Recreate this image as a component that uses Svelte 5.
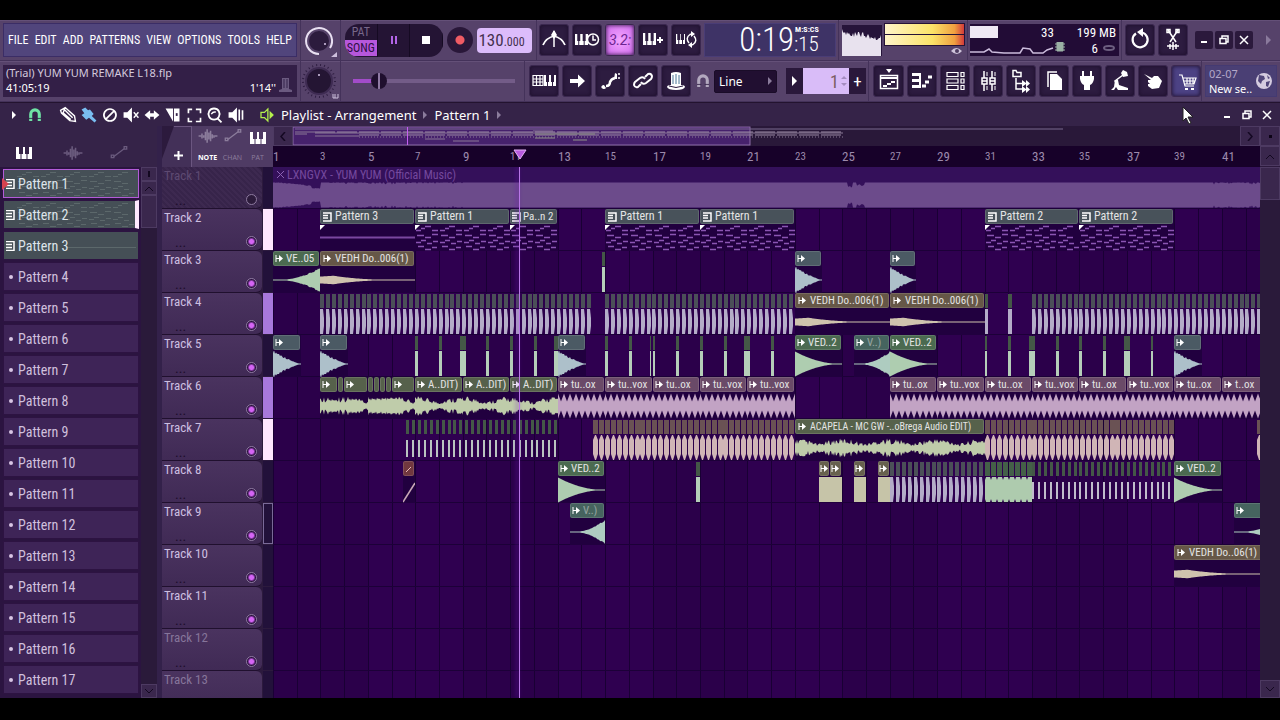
<script>
    const BEAT = 5.93;
    const px = (beats) => Math.round(beats * BEAT);

    const menu = ["FILE", "EDIT", "ADD", "PATTERNS", "VIEW", "OPTIONS", "TOOLS", "HELP"];
    const patterns = Array.from({ length: 17 }, (_, i) => `Pattern ${i + 1}`);
    const bars = Array.from({ length: 21 }, (_, i) => i * 2 + 1);

    const keys = (x, y, w = 12, h = 11) =>
        `<path fill="currentColor" fill-rule="evenodd" d="M${x} ${y}h${w}v${h}h-${w}z M${x + w / 4 - 1} ${y}v${h - 4}h1v4h1v-4h1v${4 - h}z M${x + (w * 2) / 3 - 1} ${y}v${h - 4}h1v4h1v-4h1v${4 - h}z"/>`;
    const line = (d, w = 1.5) =>
        `<path fill="none" stroke="currentColor" stroke-width="${w}" d="${d}"/>`;
    const fill = (d) => `<path fill="currentColor" d="${d}"/>`;

    // 28 x 28 drawing area, one entry per glyph
    const icons = {
        metronome: line("M3 19Q6 12 14 10Q22 12 25 19", 1.8) + line("M14 5V21") + fill("M14 4l3 5-3 4-3-4z"),
        wait: keys(2, 8, 13, 11) + `<circle cx="20" cy="13.500" r="5.500" fill="#2d1c40" stroke="currentColor" stroke-width="1.500"/>` + line("M20 9.500V14H23"),
        keysPlus: keys(4, 7, 13, 12) + line("M18 14H24M21 11V17", 2),
        keysLoop: keys(4, 8, 9, 10) + line("M17 17Q13 12 18 8.500L20 8M22 10Q26 15 21 18.500L19 19") + fill("M19 5l4 3-4 3zM20 16l-4 3 4 3z"),
        playlistKeys: line("M3 8.500H13V18.500H3ZM3 12H13M3 15H13M6.500 8V19M10 8V19", 1.2) + keys(14, 8, 12, 11),
        arrow: fill("M7 12h8V7.500l7 6.500-7 6.500V16H7z"),
        slide: line("M10 19Q14 19 14 15Q15 12 19 11", 2.5) + fill("M8 18a2.500 2 0 1 0 2 3zM19 6l2 1v5h-3z") + line("M23 6v2M23 10v2"),
        link: line("M12 17l-3 3q-3 1-4-2 0-2 1-3l5-4q3-2 5 1M16 10l3-3q3-1 4 2 0 2-1 3l-5 4q-3 2-5-1", 2),
        hat: fill("M9 6q5-2 10 0v12q4 0 4 2-1 3-9 3t-9-3q0-2 4-2z") + `<path d="M11 8v9M14 7v10M17 8v9" stroke="#4b7696" fill="none"/><path d="M7 19q7 3 14 0" stroke="#2d1c40" fill="none"/>`,
        playlist: fill("M11 2h6l-3 4z") + line("M5.500 8.500H22.500V21.500H5.500Z") + line("M5 11H23", 2) + line("M8 19h4M12 17h4M16 15h4", 2),
        steps: fill("M4 6h8v3H4zM4 12h8v3H4zM4 18h8v3H4z") + line("M12 6v15", 2) + line("M14 19h4M17 15h4M20 10h4", 3),
        rack: line("M6 5.500H17V9.500H6ZM6 12H17V16H6ZM6 18.500H17V22.500H6ZM20 5.500h3v4h-3zM20 12h3v4h-3zM20 18.500h3v4h-3z", 1.2),
        mixer: line("M10 4V24M18 4V24") + line("M13 5V9M21 5V9M13 19V23M21 19V23", 1) + `<path d="M8 11h5v6H8zM16 11h5v6h-5z" fill="#2d1c40" stroke="currentColor" stroke-width="1.500"/>` + line("M8 14h5M16 14h5"),
        browser: line("M6 3.500h3l1 2h4v4H6zM9 11V22H15M9 16.500H15") + fill("M15 13l4 3v-3l4 3.500-4 3.500v-3l-4 3zM15 19l4 3v-3l4 3.500-4 3.500v-3l-4 3z"),
        pages: line("M8 20V5H17") + fill("M10 7h7l5 5v11H10z"),
        plug: fill("M9 4h2v5h6V4h2v5h2v3q-1 5-4 6v5h-6v-5q-3-1-4-6V9h2z"),
        shovel: fill("M17 3l4 2 1 4-5 1-2-4zM5 23l3-3 1-7h3l1 5 9 3v2H12l-2-3-2 3z") + line("M17 8L9 14L11 18"),
        hand: fill("M5 7l8 4 2-2h4l4 5-3 7-7 1-4-3v-2h2l-2-2v-2h3z"),
        cart: line("M7 8h3l3 11h9M11 11h13l-2 6H13M15 11v6M18 11v6M21 11v6M12 14h11", 1.2) + fill("M13 21h3v2h-3zM19 21h3v2h-3z"),
        undo: line("M10 7.500A7.500 7.500 0 1 0 16 6.500", 2.2) + fill("M17 2v9l-6-5z"),
        cut: line("M9 4l8 12M19 4l-8 12") + line("M8 3.500h3v3H8zM17 3.500h3v3h-3z") + line("M8 20h12M11 18v5M14 16v8M17 18v5"),
        wave: line("M3 14h3M7 11v6M9 13v3M11 9v10M13 6v16M15 10v8M17 8v12M19 12v5M21 13v3M22 14h3", 1.8),
        automation: line("M8 18L20 9") + line("M5 16.500h3v3H5zM20 6.500h3v3h-3z"),
        piano: `<path fill="currentColor" fill-rule="evenodd" d="M6 8h16v12H6zM9 8v7h1.500v5h1v-5H13V8zM15 8v7h1.500v5h1v-5H19V8z"/>`,
        pencil: line("M6 9l5-3 10 9 1 6-6-1-9-8zM11 6l-2 5M10 8l9 9M8 11l9 8", 1.5),
        brush: fill("M6 8l4-2 3 3 2-1 4 5-2 2 5 5-2 2-6-5-3 2-5-5 3-2z"),
        erase: line("M14 7.500a6.500 6.500 0 1 1-.1 0zM9.500 18.500L18.500 9.500", 1.8),
        mute: fill("M6 11h4l5-5v16l-5-5H6z") + line("M17 11l5 6M22 11l-5 6"),
        slip: fill("M6 14l6-5v3h4V9l6 5-6 5v-3h-4v3z"),
        slice: fill("M6 7h8v14zM15 7h6v14h-6z") + `<path d="M17 12h2v3h-2z" fill="#352348"/>`,
        select: line("M8 12V8h4M16 8h5v4M21 17v4h-5M12 21H8v-4", 1.8),
        zoom: line("M13 7a6 6 0 1 1-.1 0zM17 18l4 4", 2) + line("M10 13q2-3 5-2"),
        play: fill("M6 11h4l5-5v16l-5-5H6z") + line("M17.500 8v12M21 9v10", 1.8),
        speaker: line("M7 11h4l4-4v14l-4-4H7z") + fill("M17 9l5 5-5 5z"),
        magnet: line("M9 21V13a5 5 0 0 1 10 0V21", 3.6) + `<path d="M7 18h5M16 18h5" stroke="#352348" />`,
    };

    const tools = [
        ["pencil", "#fff"], ["brush", "#79bdf0"], ["erase", "#fff"], ["mute", "#fff"], ["slip", "#fff"],
        ["slice", "#fff"], ["select", "#fff"], ["zoom", "#fff"], ["play", "#fff"],
    ];

    function clip(start, length, type, color, label = "") {
        return { start, length, type, color, label };
    }

    // several equal hits, one every beat
    function run(start, end, color, body, thick = 4, inset = 0) {
        return { start, length: end - start, type: "run", color, body, thick, inset };
    }

    const slim = (list, body = "#b5ceb9") =>
        list.map(([start, length]) => ({ start, length, type: "slim", color: "#445847", body }));
    const vox = (list) =>
        list.map(([start, label]) => clip(start, 8, "vox", "mauve", label));

    const tracks = [
        { strip: "", off: true, clips: [] },
        {
            strip: "#ffe6ff",
            clips: [
                clip(8, 16, "flat", "steel", "Pattern 3"), clip(24, 16, "notes", "steel", "Pattern 1"),
                clip(40, 8, "notes", "steel", "Pa..n 2"), clip(56, 16, "notes", "steel", "Pattern 1"),
                clip(72, 16, "notes", "steel", "Pattern 1"), clip(120, 16, "notes", "steel", "Pattern 2"),
                clip(136, 16, "notes", "steel", "Pattern 2"),
            ],
        },
        {
            strip: "",
            clips: [
                clip(0, 8, "rise", "green", "VE..05"), clip(8, 16, "pluck", "brown", "VEDH Do..006(1)"),
                ...slim([[55.4, 0.6]]), clip(88, 4.5, "hit", "slate"), clip(104, 4.5, "hit", "slate"),
            ],
        },
        {
            strip: "#a878dc",
            clips: [
                run(8, 54, "#4b5058", "#b4adc8"), run(56, 88, "#4b5058", "#b4adc8"),
                clip(88, 16, "pluck", "brown", "VEDH Do..006(1)"), clip(104, 16, "pluck", "brown", "VEDH Do..006(1)"),
                ...slim([[120, 0.6], [124, 0.6]], "#b4adc8"), run(128, 168, "#4b5058", "#b4adc8"),
            ],
        },
        {
            strip: "",
            clips: [
                clip(0, 4.7, "hit", "slate"), clip(8, 4.7, "hit", "slate"),
                ...slim([[24, 0.5], [28, 0.5], [31.5, 1], [36, 0.5], [40, 0.5], [44, 0.5], [47.4, 0.6]]),
                clip(48, 4.7, "hit", "slate"),
                ...slim([[56, 0.5], [60, 0.5], [63.5, 0.3], [64, 0.4], [68, 0.5], [72, 0.5], [76, 0.5], [79.5, 1], [84, 0.5]]),
                clip(88, 8, "decay", "green", "VED..2"), clip(98, 6, "rise", "teal", "V..)"),
                clip(104, 8, "decay", "green", "VED..2"),
                ...slim([[120, 0.4], [124, 0.5], [127.5, 1], [132, 0.5], [136, 0.4], [140, 0.5], [143.5, 1], [148, 0.4]]),
                clip(152, 4.7, "hit", "slate"),
            ],
        },
        {
            strip: "#a878dc",
            clips: [
                clip(8, 3, "voice", "olive"), clip(11, 1, "voice", "olive"), clip(12, 4, "voice", "olive"),
                ...[16, 17, 18, 19].map((b) => clip(b, 1, "voice", "olive")), clip(20, 4, "voice", "olive"),
                ...[24, 32, 40].map((b) => clip(b, 8, "voice", "olive", "A..DIT)")),
                ...vox([[48, "tu..ox"], [56, "tu..vox"], [64, "tu..ox"], [72, "tu..vox"], [80, "tu..vox"]]),
                ...vox([[104, "tu..ox"], [112, "tu..vox"], [120, "tu..ox"], [128, "tu..vox"], [136, "tu..ox"]]),
                ...vox([[144, "tu..vox"], [152, "tu..ox"], [160, "t..ox"]]),
            ],
        },
        {
            strip: "#ffe6ff",
            clips: [
                run(22.5, 48, "#445847", "#b9c4c0", 3, 5), run(54, 88, "#6a5254", "#d0b5b6", 6),
                clip(88, 32, "voice", "olive", "ACAPELA - MC GW -..oBrega Audio EDIT)"),
                run(120, 152, "#6a5254", "#d0b5b6", 6), run(166, 168, "#6a5254", "#d0b5b6", 6),
            ],
        },
        {
            strip: "",
            clips: [
                clip(22, 2, "auto", "red"), clip(48, 8, "decay", "green", "VED..2"), ...slim([[71.4, 0.6]]),
                ...[92, 94, 98, 102].map((b) => clip(b, 2, "block", "khaki")),
                run(104, 120, "#4b5058", "#b4adc8"), run(120, 128, "#446048", "#aecbae", 7),
                run(128, 152, "#445847", "#c0bccb", 3, 5), clip(152, 8, "decay", "green", "VED..2"),
            ],
        },
        { strip: "hollow", clips: [clip(50, 6, "rise", "teal", "V..)"), clip(162, 8, "rise", "teal")] },
        { strip: "", clips: [clip(152, 16, "pluck", "brown", "VEDH Do..06(1)")] },
        { strip: "", clips: [] },
        { strip: "", dim: true, clips: [] },
        { strip: "", dim: true, clips: [] },
    ];

    const noise = (n) => Math.abs(Math.sin(n * 12.9898) * 43758.5453) % 1;

    function mirror(w, step, amplitude) {
        let top = "";
        let bottom = "";
        for (let x = 0; x <= w; x += step) {
            const a = Math.max(0.5, amplitude(x, x / w));
            top += `L${x} ${(13 - a).toFixed(1)}`;
            bottom = `L${x} ${(13 + a).toFixed(1)}` + bottom;
        }
        return `M0 13${top}${bottom}Z`;
    }

    function shape(type, w, start) {
        if (type === "decay") return mirror(w, 1, (x, t) => 12.5 * Math.pow(1 - t, 2));
        if (type === "rise") return mirror(w, 1, (x, t) => 12.5 * Math.pow(t, 2.4) * (0.85 + noise(x) * 0.2));
        if (type === "hit") return mirror(w, 1, (x, t) => 13 * Math.pow(1 - t, 1.3) * (0.85 + noise(x) * 0.3));
        if (type === "pluck") return mirror(w, 1, (x, t) => (t < 0.14 ? 3.4 + t * 6 : 4.3 * Math.pow((1 - t) / 0.86, 3)));
        if (type === "vox") return mirror(w, 1, (x) => 4.5 + 8 * Math.abs((x % 6) - 3) / 3);
        if (type === "voice")
            return mirror(w, 1, (x) => (3 + 4 * Math.abs(Math.cos(x / 15))) * (0.5 + noise(x + start) * 0.9));
        if (type === "block") return `M0 0H${w}V25H0Z`;
        return "";
    }

    // the phrase that repeats every bar inside a pattern clip
    const phrase = [
        [1, 4, 5], [6, 2, 4], [10, 0, 6], [17, 4, 6], [2, 9, 7], [10, 11, 6], [17, 8, 6],
        [1, 16, 5], [6, 14, 5], [12, 17, 5], [18, 15, 5], [3, 20, 6], [10, 23, 6], [17, 21, 5],
    ];

    function notes(w, scale = 24) {
        let d = "";
        for (let x = 0; x < w - 6; x += scale) {
            for (const [dx, y, len] of phrase) {
                if (x + dx + len <= w) d += `M${x + dx} ${y + 1.5}h${len}`;
            }
        }
        return d;
    }

    const song = mirror(987, 1, (x) => {
        if (x < 48) return 10 + Math.cos(x / 16) * 2 + noise(x) - (x > 38 ? 2 : 0);
        if (x > 574 && x < 580) return 10 - noise(x) * 3;
        if (x > 583 && x < 592) return 9 + noise(x) * 2;
        return x < 190 || x > 940 ? 12.5 - Math.pow(noise(x), 6) * 2 : 12.5;
    });

    const scope = "M0 31V10" +
        Array.from({ length: 40 }, (_, x) => `L${x} ${Math.round(4 + x * 0.15 + noise(x * 3) * 6)}`).join("") + "V31Z";
</script>

{#snippet icon(name, size = 28)}
    <svg class="icon" width={size} height={size} viewBox="0 0 28 28" aria-hidden="true">{@html icons[name]}</svg>
{/snippet}

{#snippet tool(name, label)}
    <button class="tool {name}" aria-label={label ?? name}>{@render icon(name)}</button>
{/snippet}

{#snippet windowButtons()}
    <button aria-label="Minimize"><svg width="14" height="14"><path d="M4 9h6" stroke="#fff" stroke-width="2" /></svg></button>
    <button aria-label="Restore"><svg width="14" height="14"><path d="M3 5.500h6v5H3zM5 5V3h6v6H9" fill="none" stroke="#fff" stroke-width="1.500" /></svg></button>
    <button aria-label="Close"><svg width="14" height="14"><path d="M3 3l8 8M11 3l-8 8" stroke="#fff" stroke-width="1.500" /></svg></button>
{/snippet}

<div class="app">
    <header class="toolbar">
        <div class="bar">
            <div class="cell left">
                <nav class="menu">
                    {#each menu as item}<button>{item}</button>{/each}
                </nav>
            </div>
            <div class="cell knob">
                <svg width="38" height="38" viewBox="0 0 38 38">
                    <circle cx="18" cy="20" r="10" fill="#2c1b3d" />
                    <path d="M18 33A13 13 0 1 1 29 27" fill="none" stroke="#e9e0f2" stroke-width="2" />
                    <circle cx="24" cy="23" r="1" fill="#d8c8ea" />
                    <path d="M36 31v5h-6z" fill="#cdbfdc" />
                </svg>
            </div>
            <div class="cell transport">
                <div class="pill">
                    <button class="mode"><span>PAT</span><span class="song">SONG</span></button>
                    <button aria-label="Pause"><svg width="10" height="10"><path d="M2 1h2v8H2zM6 1h2v8H6z" fill="#b264e6" /></svg></button>
                    <button aria-label="Stop"><svg width="10" height="10"><path d="M1 1h8v8H1z" fill="#fff" /></svg></button>
                </div>
                <button class="record" aria-label="Record"></button>
                <button class="tempo">130<small>.000</small></button>
            </div>
            <div class="cell grow">
                {@render tool("metronome")}
                {@render tool("wait")}
                <button class="tool count">3.2:</button>
                {@render tool("keysPlus", "Step edit")}
                {@render tool("keysLoop", "Loop record")}
                <div class="time">
                    <span class="big">0:19</span><span class="small"><i>M:S:CS</i>:15</span>
                </div>
            </div>
            <div class="cell meters">
                <svg width="40" height="31" class="scope"><path d={scope} fill="#e8e2ee" /></svg>
                <div class="levels">
                    <i></i><i></i>
                    <svg width="14" height="10"><path d="M1 5q5-6 11 0q-5 6-11 0z" fill="#cfc4da" /><circle cx="7" cy="5" r="2" fill="#4d3c60" /></svg>
                </div>
            </div>
            <div class="cell">
                <div class="memory">
                    <div><b></b><span>33</span><span>199 MB</span></div>
                    <div>
                        <svg width="84" height="14"><path d="M0 11h14l5-3 3 3 12 1h16l3-5 7 1 3 4h10l4-3 6-2" fill="none" stroke="#cbbcdc" stroke-width="1.500" /></svg>
                        <svg width="12" height="12"><path d="M3 0h6v9H3zM1 2h10M1 5h10M1 8h10" fill="#9ab0a4" stroke="#9ab0a4" /></svg>
                        <span class="voices">6</span>
                        <svg width="14" height="8"><ellipse cx="7" cy="4" rx="5" ry="2" fill="none" stroke="#6d5f80" stroke-width="2" /></svg>
                    </div>
                </div>
            </div>
            <div class="cell last">
                {@render tool("undo")}
                {@render tool("cut")}
                <div class="windows boxed">{@render windowButtons()}</div>
                <svg width="6" height="10"><path d="M0 0l5 5-5 5z" fill="#8a7a9c" /></svg>
            </div>
        </div>

        <div class="bar">
            <div class="cell left">
                <div class="project">
                    <div>(Trial) YUM YUM REMAKE L18.flp</div>
                    <div class="hint"><span>41:05:19</span><span>1'14''</span></div>
                    <svg width="16" height="18"><path d="M4 2h7v11l3 1v2H1v-2l3-1z" fill="#6b5a80" /><path d="M6 3v9M9 3v9" stroke="#35234a" /></svg>
                </div>
            </div>
            <div class="cell knob">
                <svg width="38" height="38" viewBox="0 0 38 38">
                    <circle cx="18" cy="19" r="16" fill="none" stroke="#2f1e42" stroke-width="2" stroke-dasharray="1 3" />
                    <circle cx="18" cy="19" r="13" fill="#241533" stroke="#3e2b52" stroke-width="2" />
                    <circle cx="18" cy="13" r="1" fill="#d8c8ea" />
                    <path d="M32 32v4h5v-4M34 32v4" fill="none" stroke="#cdbfdc" />
                </svg>
            </div>
            <div class="cell grow"><input type="range" min="0" max="100" value="12" aria-label="Song position" /></div>
            <div class="cell modes">
                {@render tool("playlistKeys", "Pattern keys")}
                {@render tool("arrow")}
                {@render tool("slide")}
                {@render tool("link")}
                {@render tool("hat")}
                <span class="snap">{@render icon("magnet", 24)}</span>
                <div class="drop">
                    <select aria-label="Snap"><option>Line</option></select>
                    <svg width="5" height="8"><path d="M0 0l4 4-4 4z" fill="#8b7c9c" /></svg>
                </div>
                <div class="picker">
                    <button aria-label="Next pattern"><svg width="6" height="10"><path d="M0 0l5 5-5 5z" fill="#fff" /></svg></button>
                    <input type="text" value="1" aria-label="Pattern number" />
                    <button>+</button>
                    <svg width="6" height="12"><path d="M0 4l3-3 3 3zM0 8l3 3 3-3z" fill="#a58cc0" /></svg>
                </div>
            </div>
            <div class="cell panels">
                {#each ["playlist", "steps", "rack", "mixer", "browser", "pages", "plug", "shovel", "hand", "cart"] as name}
                    {@render tool(name)}
                {/each}
            </div>
            <div class="cell last">
                <button class="news">
                    <span><i>02-07</i>New se..</span>
                    <svg width="18" height="18"><circle cx="9" cy="9" r="8" fill="#d5cce0" /><path d="M4 3l5 1 1 3-3 2-1 3-3-3zM11 10l4-1-2 6-2-1zM12 3l3 3-2 1z" fill="#51467a" /></svg>
                </button>
            </div>
        </div>
    </header>

    <div class="titlebar">
        <svg width="5" height="8"><path d="M0 0l4 4-4 4z" fill="#fff" /></svg>
        <button class="snapping" aria-label="Snap">{@render icon("magnet", 24)}</button>
        <div class="brushes">
            {#each tools as [name, color]}
                <button style:color aria-label={name}>{@render icon(name, 26)}</button>
            {/each}
        </div>
        <button class="preview-button" aria-label="Preview">{@render icon("speaker", 24)}</button>
        <button class="crumb">Playlist - Arrangement</button>
        <svg width="5" height="8"><path d="M0 0l4 4-4 4z" fill="#8b7c9c" /></svg>
        <button class="crumb">Pattern 1</button>
        <svg width="5" height="8"><path d="M0 0l4 4-4 4z" fill="#8b7c9c" /></svg>
        <div class="windows">{@render windowButtons()}</div>
    </div>

    <main>
        <aside>
            <div class="tabs">
                <button class="active" aria-label="Patterns">{@render icon("piano", 28)}</button>
                <button aria-label="Audio">{@render icon("wave", 24)}</button>
                <button aria-label="Automation">{@render icon("automation", 24)}</button>
            </div>
            <div class="list">
                <ul>
                    {#each patterns as name, i}
                        <li>
                            <button class:used={i < 3} class:selected={i === 0} class:playing={i === 1}>
                                {#if i < 3}
                                    <svg class="preview" width="120" height="26">
                                        <path d={i < 2 ? notes(118) : "M50 14.500H120"} stroke="#5c686b" fill="none" />
                                    </svg>
                                    <svg width="9" height="10"><path d="M0 .5h8v9H0M0 3.500h6M0 6.500h6" fill="none" stroke="#fff" stroke-width="1.500" /></svg>
                                {:else}
                                    <i></i>
                                {/if}
                                <span>{name}</span>
                            </button>
                        </li>
                    {/each}
                </ul>
                <div class="scroll">
                    <button aria-label="Menu"><svg width="4" height="6"><path d="M1 0h2v6H1z" fill="#130820" /></svg></button>
                    <button aria-label="Up"><svg width="8" height="5"><path d="M0 5l4-4 4 4" fill="none" stroke="#130820" /></svg></button>
                    <div class="thumb"></div>
                    <button class="end" aria-label="Down"><svg width="8" height="5"><path d="M0 0l4 4 4-4" fill="none" stroke="#130820" /></svg></button>
                </div>
            </div>
        </aside>

        <section class="playlist">
            <div class="top">
                <button class="add" aria-label="Add track"><svg width="9" height="9"><path d="M4.500 0v9M0 4.500h9" stroke="#fff" stroke-width="2" /></svg></button>
                <div class="focus">
                    <button>{@render icon("wave", 24)}<span>NOTE</span></button>
                    <button>{@render icon("automation", 24)}<span>CHAN</span></button>
                    <button>{@render icon("piano", 28)}<span>PAT</span></button>
                </div>
                <div class="ruler">
                    <div class="overview">
                        <button aria-label="Scroll left"><svg width="6" height="9"><path d="M5 0L1 4.500 5 9" fill="none" stroke="#140822" stroke-width="1.500" /></svg></button>
                        <div class="map">
                            <svg width="770" height="20">
                                <rect x="0" y="1" width="457" height="18" fill="#46216c" stroke="#8c6ba8" />
                                <path d="M2 3H770" stroke="#7b6a90" />
                                <path d="M2 6H22M2 8H14M22 7H550M22 10H66M132 13H152M240 5h20M160 15h26" stroke="#8a7896" />
                                <path d="M22 6H550M66 9H550" stroke="#9c8aa6" stroke-dasharray="20 2" />
                                <path d="M66 11H550" stroke="#8a7896" stroke-dasharray="1 2" />
                                <path d="M242 8h60M242 12h20M280 14h14" stroke="#8f9488" />
                                <path d="M114.500 1V19" stroke="#c560f0" />
                            </svg>
                        </div>
                        <button aria-label="Scroll right"><svg width="6" height="9"><path d="M1 0l4 4.500L1 9" fill="none" stroke="#140822" stroke-width="1.500" /></svg></button>
                    </div>
                    <div class="bars">
                        {#each bars as bar}
                            <span class:minor={bar % 4 === 3} style="left: {px((bar - 1) * 4)}px">{bar}</span>
                        {/each}
                        <svg class="marker" width="14" height="11" style="left: {px(41.5) - 6}px"><path d="M1 1h12L7 10z" fill="#b85be0" stroke="#e3b4f5" /></svg>
                    </div>
                </div>
                <div class="corner"><button aria-label="Zoom"><i></i></button><button aria-label="Up"><svg width="8" height="5"><path d="M0 5l4-4 4 4" fill="none" stroke="#130820" /></svg></button></div>
            </div>

            <div class="body">
                <div class="tracks">
                    {#each tracks as track, t}
                        <div class="track" class:off={track.off} class:dim={track.dim}>
                            <div class="head">
                                <span>Track {t + 1}</span>
                                {#if t < 12}
                                    <em>...</em>
                                    <button aria-label="Mute track {t + 1}"></button>
                                {/if}
                            </div>
                            <div class="strip" class:hollow={track.strip === "hollow"} style:background={track.strip === "hollow" ? null : track.strip}></div>
                        </div>
                    {/each}
                </div>

                <div class="lanes">
                    <svg class="grid" width="100%" height="100%">
                        {#each Array(42) as _, b}
                            <rect x={px(b * 4)} width="24" height="100%" fill={b % 8 < 4 ? "#2b004a" : "#2f0050"} />
                            <rect x={px(b * 4)} width="1" height="100%" fill="#190034" />
                        {/each}
                    </svg>
                    {#each tracks as track, t}
                        <div class="lane">
                            {#if t === 0}
                                <div class="song-clip">
                                    <div><svg width="9" height="9"><path d="M1 1l7 7M8 1L1 8" stroke="#8c62b4" /></svg>LXNGVX - YUM YUM (Official Music)</div>
                                    <svg width="987" height="26"><path d={song} fill="#6c4b8b" /></svg>
                                </div>
                            {/if}
                            {#each track.clips as c}
                                {@const w = px(c.start + c.length) - px(c.start)}
                                {#if c.type === "run"}
                                    <svg class="clip" width={w} height="42" style="left: {px(c.start)}px">
                                        {#each Array(Math.round(c.length)) as _, i}
                                            <rect x={px(i)} y="1" width={Math.min(c.thick, 5)} height="14" fill={c.color} />
                                            {#if c.thick > 6}
                                                <path d="M{px(i)} 19l1-3h4l1 3v19l-1 3h-4l-1-3z" fill={c.body} />
                                            {:else if c.thick > 4}
                                                <path d="M{px(i)} 21l2-5h1l2 5v14l-2 6h-1l-2-6z" fill={c.body} />
                                            {:else if c.inset}
                                                <rect x={px(i)} y={16 + c.inset} width="2" height="17" fill={c.body} />
                                            {:else}
                                                <path d="M{px(i)} 16h3l1 9v8l-1 8h-3z" fill={c.body} />
                                            {/if}
                                        {/each}
                                    </svg>
                                {:else if c.type === "slim"}
                                    <svg class="clip" width={w} height="42" style="left: {px(c.start)}px">
                                        <rect y="1" width={w} height="14" fill={c.color} />
                                        <rect y="16" width={w} height="25" fill={c.body} />
                                    </svg>
                                {:else}
                                    <div class="clip {c.color}" class:short={w < 60} class:long={c.label.length > 20} style="left: {px(c.start)}px; width: {w}px">
                                        <div class="name">
                                            {#if c.color === "steel"}
                                                <svg width="9" height="10"><path d="M0 1h8v8H0M0 3.500h5M0 6h5" fill="none" stroke="#fff" stroke-width="1.500" /></svg>
                                            {:else if c.type === "auto"}
                                                <svg width="8" height="8"><path d="M1 7L6 2" stroke="#e8b8b8" /></svg>
                                            {:else if w > 8}
                                                <svg width="9" height="7"><path d="M1 0v7M1 3.500h6" stroke="#fff" /><path d="M4 0l4 3.500L4 7z" fill="#fff" /></svg>
                                            {/if}
                                            <span class:faded={c.label === "V..)"}>{c.label}</span>
                                        </div>
                                        <svg width={w} height="26">
                                            {#if c.type === "notes"}
                                                <path d="M0 0h5L0 5z" fill="#fff" />
                                                <path d={notes(w)} stroke="#8b55b3" stroke-width="1.500" fill="none" />
                                            {:else if c.type === "flat"}
                                                <path d="M0 0h5L0 5z" fill="#fff" />
                                                <path d="M0 12.500H{w}" stroke="#7a479f" stroke-width="2" />
                                            {:else if c.type === "auto"}
                                                <path d="M0 25L{w} 6" stroke="#c9a8b8" stroke-width="1.500" />
                                            {:else}
                                                <path d={shape(c.type, w, c.start)} fill="currentColor" />
                                            {/if}
                                        </svg>
                                    </div>
                                {/if}
                            {/each}
                        </div>
                    {/each}
                    <div class="playhead" style="left: {px(41.5)}px"></div>
                </div>

                <div class="scroll wide">
                    <div class="thumb"></div>
                    <button class="end" aria-label="Down"><svg width="8" height="5"><path d="M0 0l4 4 4-4" fill="none" stroke="#130820" /></svg></button>
                </div>
            </div>
        </section>
    </main>

    <svg class="cursor" width="13" height="19"><path d="M1 1v14l3-3 3 6 2-1-3-6h5z" fill="#fff" stroke="#222" /></svg>
</div>

<style>
    :global(body) {
        margin: 0;
        background: #000;
    }

    .app {
        position: relative;
        box-sizing: border-box;
        height: 100vh;
        padding: 20px 0 22px;
        display: flex;
        flex-direction: column;
        overflow: hidden;
        background: #000;
        color: #fff;
        font-family: "Roboto Condensed", Roboto, "Liberation Sans", sans-serif;
        font-size: 12px;
    }

    button {
        display: flex;
        align-items: center;
        justify-content: center;
        box-sizing: border-box;
        padding: 0;
        border: 0;
        background: none;
        color: inherit;
        font: inherit;
    }

    svg {
        flex: none;
        display: block;
    }

    i,
    em {
        font-style: normal;
    }

    /* toolbar */

    .toolbar {
        flex: none;
        background: #56426a;
    }

    .bar {
        display: flex;
        height: 41px;
    }

    .cell {
        display: flex;
        flex: none;
        align-items: center;
        gap: 3px;
        box-sizing: border-box;
        padding: 0 2px;
        border-right: 1px solid #44325a;
        border-bottom: 1px solid #44325a;
        box-shadow: inset 0 1px #645078;
    }

    .grow {
        flex: 1;
        min-width: 0;
    }

    .left {
        width: 301px;
        padding: 0 3px;
    }

    .knob {
        width: 40px;
        padding: 0;
    }

    .menu {
        flex: 1;
        display: flex;
        align-items: center;
        justify-content: space-between;
        height: 32px;
        padding: 0 4px;
        border: 1px solid #3b2d66;
        background: #51457c;
        font-size: 12px;
    }

    .project {
        position: relative;
        flex: 1;
        height: 32px;
        padding: 0 3px;
        background: #331f47;
        font-family: "Noto Sans", sans-serif;
        font-size: 11px;
        line-height: 15px;
        color: #d3cadd;
    }

    .project svg {
        position: absolute;
        right: 3px;
        bottom: 3px;
    }

    .hint {
        display: flex;
        justify-content: space-between;
        padding-right: 18px;
        color: #fff;
    }

    .transport {
        width: 196px;
        padding: 0 4px;
        gap: 4px;
    }

    .pill {
        display: flex;
        width: 98px;
        height: 33px;
        border-radius: 14px;
        overflow: hidden;
        background: #241434;
    }

    .pill button {
        flex: 1;
        border-right: 1px solid #150a22;
    }

    .pill .mode {
        flex-direction: column;
        font-size: 12px;
        line-height: 16px;
        color: #77678a;
    }

    .song {
        width: 100%;
        background: #b657dc;
        color: #2c0f42;
    }

    .record {
        width: 26px;
        height: 26px;
        border-radius: 50%;
        background: radial-gradient(circle, #ef5b64 0 4px, #291739 5px);
    }

    .tempo {
        width: 55px;
        height: 25px;
        padding-right: 6px;
        border-radius: 4px;
        background: #dcbcfb;
        color: #44304e;
        font-size: 17px;
    }

    .tempo small {
        font-size: 12px;
        padding-top: 3px;
    }

    .tool {
        width: 30px;
        height: 32px;
        border: 1px solid #3b2850;
        border-radius: 3px;
        background: #2d1c40;
        box-shadow: inset 0 0 4px #1c0e2b;
    }

    .count {
        background: radial-gradient(#f3a5ff, #d06aef);
        color: #6c2390;
        font-family: Roboto, sans-serif;
        font-size: 14px;
        font-style: italic;
    }

    .cart {
        background: #4c4284;
    }

    .time {
        flex: 1;
        display: flex;
        align-items: center;
        justify-content: center;
        height: 32px;
        padding-left: 18px;
        border: 1px solid #4a3d76;
        background: #3e3366;
    }

    .big {
        font-size: 33px;
        line-height: 32px;
        font-weight: 300;
    }

    .small {
        display: flex;
        flex-direction: column;
        font-size: 21px;
        line-height: 20px;
        font-weight: 300;
    }

    .small i {
        align-self: flex-end;
        font-size: 8px;
        line-height: 8px;
        font-weight: 700;
    }

    .meters {
        width: 129px;
        padding: 0 3px;
    }

    .scope {
        background: #26143a;
    }

    .levels {
        display: flex;
        flex-direction: column;
        gap: 1px;
        flex: 1;
    }

    .levels i {
        height: 10px;
        background: linear-gradient(90deg, #fff4c8, #fbe368 60%, #f0a040 88%, #d33a3a);
        outline: 1px solid #251236;
    }

    .levels svg {
        align-self: flex-end;
    }

    .memory {
        width: 149px;
        background: #220c36;
        font-size: 13px;
    }

    .memory div {
        display: flex;
        align-items: center;
        justify-content: space-between;
        height: 16px;
        padding-right: 3px;
    }

    .memory b {
        width: 28px;
        height: 12px;
        margin-right: 20px;
        background: #efe9f4;
    }

    .memory .voices {
        margin-left: auto;
        padding: 0 4px;
    }

    .last {
        width: 158px;
        gap: 3px;
        padding: 0 3px;
        border-right: 0;
    }

    .windows {
        display: flex;
        gap: 2px;
    }

    .windows button {
        width: 18px;
        height: 18px;
    }

    .boxed {
        margin: 0 10px 0 4px;
    }

    .boxed button {
        background: #2b193c;
        border-radius: 2px;
    }

    .bar:last-child .last {
        width: 78px;
    }

    input[type="range"] {
        appearance: none;
        flex: 1;
        min-width: 0;
        height: 16px;
        margin: 0 7px 0 10px;
        background: linear-gradient(90deg, #a24cc9 16%, #735c88 16%) center / 100% 4px no-repeat;
    }

    input[type="range"]::-webkit-slider-thumb {
        appearance: none;
        width: 16px;
        height: 16px;
        border-radius: 50%;
        background: linear-gradient(90deg, #1f0f2e 46%, #8f7aa4 46% 54%, #1f0f2e 54%);
    }

    .modes {
        width: 344px;
        padding: 0 0 0 4px;
    }

    .panels {
        width: 333px;
        padding: 0 0 0 4px;
    }

    .snap {
        display: flex;
        justify-content: center;
        width: 17px;
        color: #b3a9bf;
    }

    .drop,
    .picker {
        position: relative;
        display: flex;
        align-items: center;
    }

    .drop svg {
        position: absolute;
        right: 4px;
    }

    select {
        appearance: none;
        width: 63px;
        height: 23px;
        padding: 0 4px;
        border: 1px solid #1a0c28;
        border-radius: 2px;
        background: #210f31;
        color: #fff;
        font: 12px "Noto Sans", sans-serif;
    }

    .picker {
        margin-left: 6px;
    }

    .picker svg:last-child {
        position: absolute;
        right: 19px;
    }

    .picker button {
        width: 17px;
        height: 26px;
        background: #2a183b;
        font-size: 17px;
    }

    .picker button svg:last-child {
        position: static;
    }

    .picker input {
        box-sizing: border-box;
        width: 46px;
        height: 26px;
        padding: 0 10px 0 0;
        border: 0;
        background: #d9bcf8;
        color: #7c5c62;
        font: 18px "Roboto Condensed", Roboto, sans-serif;
        text-align: right;
    }

    .news {
        flex: 1;
        justify-content: space-between;
        height: 32px;
        padding: 0 3px;
        border: 1px solid #443a72;
        background: #4a3f74;
        text-align: left;
        font-family: "Noto Sans", sans-serif;
        font-size: 11px;
        line-height: 15px;
    }

    .news i {
        display: block;
        color: #b3a8c9;
    }

    /* playlist title */

    .titlebar {
        flex: none;
        display: flex;
        align-items: center;
        box-sizing: border-box;
        height: 24px;
        padding: 0 4px 0 12px;
        border-top: 1px solid #23132f;
        background: #352348;
        font-family: "Noto Sans", sans-serif;
        font-size: 13px;
    }

    .snapping {
        margin: 0 10px 0 6px;
        color: #6fe3a5;
    }

    .preview-button {
        margin: 0 2px 0 9px;
        color: #b4f04c;
    }

    .brushes {
        display: flex;
    }

    .brushes button {
        width: 21px;
    }

    .crumb + svg {
        margin: 0 6px 0 7px;
    }

    .titlebar .windows {
        margin-left: auto;
    }

    /* pattern picker */

    main {
        flex: 1;
        min-height: 0;
        display: flex;
        background: #2c1a3d;
    }

    aside {
        width: 157px;
        flex: none;
        display: flex;
        flex-direction: column;
        border-right: 5px solid #33214a;
        background: #2b1440;
    }

    .tabs {
        display: flex;
        align-items: center;
        justify-content: space-between;
        height: 41px;
        box-sizing: border-box;
        padding: 12px 26px 0 10px;
        background: #352348;
    }

    .tabs button {
        color: #6b5b7e;
    }

    .tabs .active {
        color: #fff;
    }

    .list {
        flex: 1;
        min-height: 0;
        display: flex;
    }

    ul {
        flex: 1;
        margin: 0;
        padding: 2px 0 0 3px;
        list-style: none;
        overflow: hidden;
    }

    li {
        height: 31px;
    }

    li button {
        position: relative;
        justify-content: flex-start;
        gap: 3px;
        width: 136px;
        height: 29px;
        padding: 0 2px;
        border: 1px solid #2d1342;
        background: #3e2457;
        font-size: 14px;
        color: #d0c0dd;
    }

    li i {
        width: 4px;
        height: 4px;
        margin: 0 2px 0 3px;
        border-radius: 50%;
        background: #d8c6e4;
    }

    li .used {
        background: #454f56;
        color: #dde4ea;
    }

    li .selected {
        border-color: #b35cd8;
    }

    li .selected::before {
        position: absolute;
        left: -2px;
        top: 8px;
        border: 6px solid transparent;
        border-left: 7px solid #d8434f;
        border-right: 0;
        content: "";
        z-index: 1;
    }

    li .playing {
        border-right: 4px solid #ffe9ff;
    }

    .preview {
        position: absolute;
        left: 12px;
        top: 1px;
    }

    li span {
        position: relative;
    }

    .scroll {
        display: flex;
        flex-direction: column;
        width: 16px;
        background: #2a1a3a;
    }

    .scroll button,
    .scroll .thumb,
    .corner button,
    .overview button {
        box-sizing: border-box;
        border: 1px solid #4d3a62;
        background: #3a274d;
    }

    .scroll button {
        height: 14px;
    }

    .scroll .thumb {
        height: 33px;
    }

    .scroll .end {
        margin-top: auto;
    }

    .wide {
        width: 20px;
        flex: none;
    }

    .wide .end {
        height: 18px;
    }

    /* playlist */

    .playlist {
        flex: 1;
        min-width: 0;
        display: flex;
        flex-direction: column;
    }

    .top {
        display: flex;
        flex: none;
        height: 41px;
    }

    .add {
        width: 30px;
        padding: 16px 0 0 4px;
        border: 1px solid #6b5680;
        border-width: 1px 1px 0 0;
        background: #433058;
        clip-path: polygon(12px 0, 100% 0, 100% 100%, 0 100%, 0 80%);
    }

    .focus {
        display: flex;
        justify-content: space-between;
        box-sizing: border-box;
        width: 81px;
        padding: 0 3px;
        background: #4f3b64;
    }

    .focus button {
        flex-direction: column;
        justify-content: space-between;
        width: 25px;
        padding: 2px 0 5px;
        color: #8c7d9c;
        font: 500 7px "Open Sans", sans-serif;
    }

    .focus button .icon {
        margin: -4px 0;
    }

    .focus button:first-child span {
        color: #fff;
        font-weight: 700;
    }

    .focus button:last-child .icon {
        color: #fff;
    }

    .ruler {
        flex: 1;
        min-width: 0;
        display: flex;
        flex-direction: column;
    }

    .overview {
        display: flex;
        height: 20px;
        background: #291839;
    }

    .overview button {
        width: 20px;
    }

    .map {
        flex: 1;
        min-width: 0;
        overflow: hidden;
    }

    .bars {
        position: relative;
        flex: 1;
        background: #170129;
        overflow: hidden;
    }

    .bars span {
        position: absolute;
        top: 3px;
        font-size: 13px;
        color: #9c8aac;
    }

    .bars .minor {
        top: 4px;
        font-size: 11px;
    }

    .marker {
        position: absolute;
        top: 3px;
    }

    .corner {
        width: 20px;
        flex: none;
    }

    .corner button {
        width: 20px;
        height: 20px;
    }

    .corner i {
        width: 3px;
        height: 3px;
        background: #0c0316;
    }

    .body {
        flex: 1;
        min-height: 0;
        display: flex;
        overflow: hidden;
    }

    .tracks {
        flex: none;
        width: 111px;
    }

    .track {
        display: flex;
        height: 42px;
    }

    .head {
        position: relative;
        box-sizing: border-box;
        width: 100px;
        padding: 1px 2px;
        border-bottom: 1px solid #20102e;
        border-radius: 0 6px 6px 0;
        background: linear-gradient(#4a335f, #402a55);
        color: #cdbfe0;
        font-size: 13px;
    }

    .head em {
        position: absolute;
        left: 13px;
        bottom: 0;
        color: #1e0d2c;
        font-size: 14px;
    }

    .head button {
        position: absolute;
        right: 5px;
        bottom: 3px;
        width: 11px;
        height: 11px;
        border: 1px solid #8e7ba0;
        border-radius: 50%;
        background: radial-gradient(#d565f5 0 2px, #2b0f40 4px);
    }

    .off .head {
        background: repeating-linear-gradient(45deg, #37244a 0 2px, #3d2950 2px 4px);
        color: #5e4a72;
    }

    .off .head button {
        background: #2c1b3b;
    }

    .dim .head {
        color: #86759a;
    }

    .strip {
        box-sizing: border-box;
        width: 10px;
        height: 41px;
        margin-left: 1px;
        background: #22113a;
    }

    .hollow {
        border: 1px solid #7a6a98;
    }

    .lanes {
        position: relative;
        flex: 1;
        min-width: 0;
        overflow: hidden;
        background: #2b004f;
    }

    .grid {
        position: absolute;
        inset: 0;
    }

    .lane {
        position: relative;
        box-sizing: border-box;
        height: 42px;
        border-bottom: 1px solid #1c0038;
    }

    .song-clip {
        background: #34105a;
    }

    .song-clip div {
        display: flex;
        align-items: center;
        gap: 2px;
        height: 15px;
        padding-left: 3px;
        color: #75499e;
        font-size: 12px;
    }

    .clip {
        position: absolute;
        top: 0;
        overflow: hidden;
        background: #21003f;
    }

    svg.clip {
        background: none;
    }

    .name {
        display: flex;
        align-items: center;
        gap: 3px;
        box-sizing: border-box;
        height: 15px;
        margin: 0 1px 1px 0;
        padding-left: 2px;
        border: 1px solid rgb(255 255 255 / 12%);
        border-radius: 2px;
        overflow: hidden;
        white-space: nowrap;
        font-size: 11px;
        line-height: 13px;
        color: #e4e4e4;
    }

    .faded {
        opacity: 0.5;
    }

    .steel .name {
        background: #48525a;
        font-size: 12px;
    }

    .short .name {
        gap: 2px;
        padding-left: 1px;
        font-size: 11px;
    }

    .long .name {
        font-size: 10px;
    }

    .green {
        color: #aecdb0;
    }

    .green .name {
        background: #4b6a50;
    }

    .teal {
        color: #aeccc0;
    }

    .teal .name {
        background: #46645f;
    }

    .brown {
        color: #cfc3ae;
    }

    .brown .name {
        background: #665747;
    }

    .slate {
        color: #adc0ca;
    }

    .slate .name {
        background: #4b5a64;
    }

    .olive {
        color: #bfccaa;
    }

    .olive .name {
        background: #56614b;
    }

    .mauve {
        color: #c2a3c4;
    }

    .mauve .name {
        background: #6a4a68;
    }

    .khaki {
        color: #c6c4a8;
    }

    .khaki .name {
        background: #67614e;
        padding-left: 0;
    }

    .red .name {
        background: #71383f;
    }

    .playhead {
        position: absolute;
        top: 0;
        bottom: 0;
        width: 1px;
        background: #b877e6;
        box-shadow: -2px 0 4px #6e12b8;
    }

    .cursor {
        position: absolute;
        left: 1182px;
        top: 106px;
    }
</style>
